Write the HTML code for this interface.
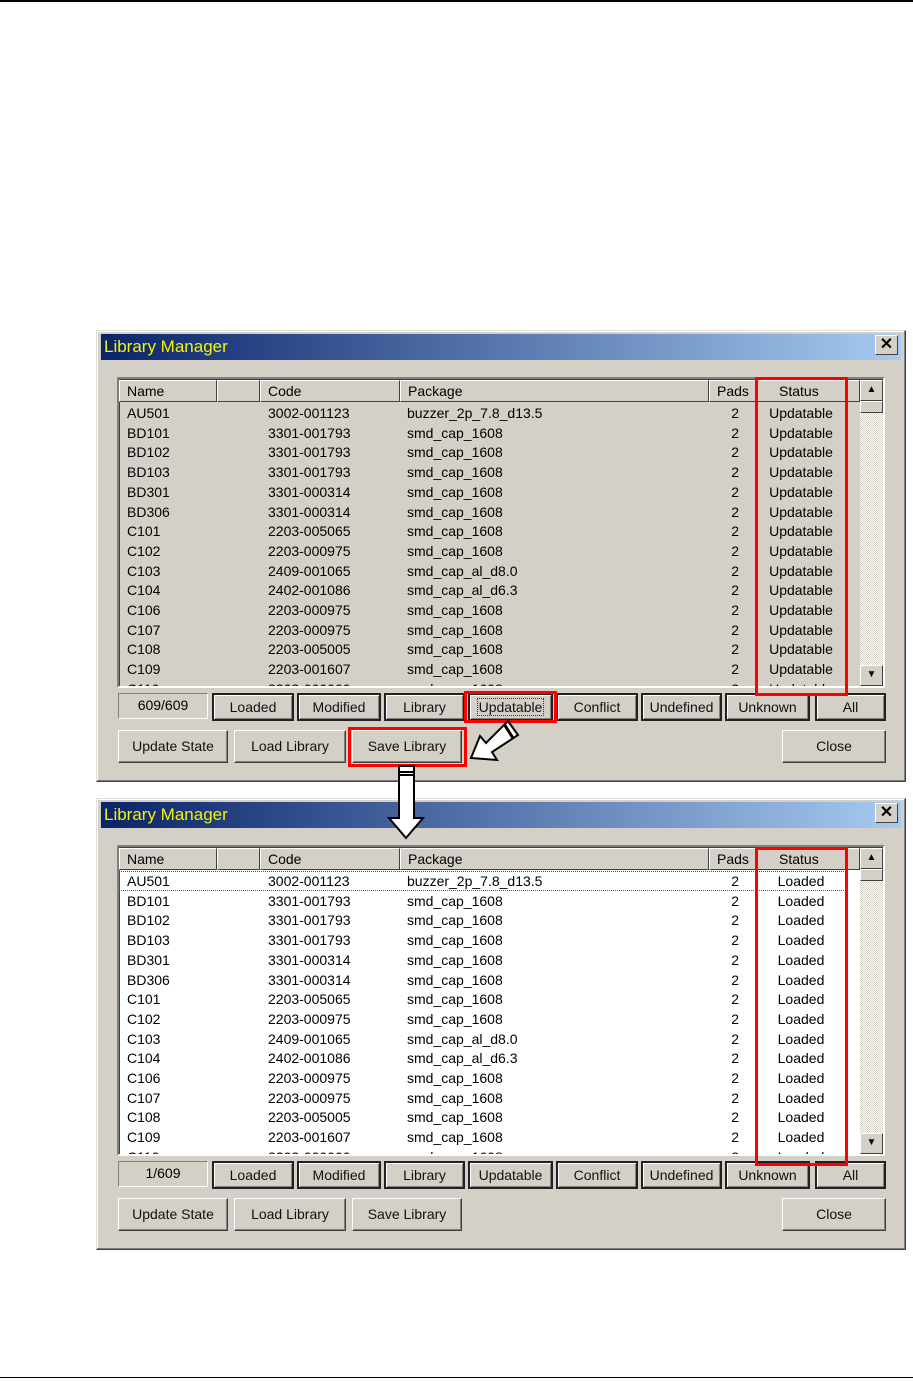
<!DOCTYPE html>
<html><head><meta charset="utf-8"><style>
*{margin:0;padding:0;box-sizing:border-box}
body{width:913px;height:1381px;background:#fff;position:relative;overflow:hidden;font-family:"Liberation Sans",Tahoma,sans-serif;font-size:14px;color:#000}
.a{position:absolute}
.dlg{position:absolute;left:96px;top:330px;width:810px;height:452px;background:#d4d0c8;border:1px solid;border-color:#e0ded8 #404040 #404040 #e0ded8;box-shadow:inset -1px -1px #808080,inset 1px 1px #fff}
.title{position:absolute;left:4px;top:3px;width:800px;height:26px;background:linear-gradient(90deg,#0a246a,#a6caf0);color:#f4f400;font-size:17px;line-height:26px;padding-left:3px}
.xbtn{position:absolute;left:778px;top:4px;width:23px;height:20px;background:#d4d0c8;border:1px solid;border-color:#fff #404040 #404040 #fff;font-size:16px;font-weight:bold;line-height:17px;text-align:center}
.list{position:absolute;left:117px;top:377px;width:768px;height:311px;border:2px solid;border-color:#808080 #fff #fff #808080;box-shadow:inset 1px 1px #404040}
.hd{position:absolute;top:380px;height:22px;background:#d4d0c8;border:1px solid;border-color:#fff #404040 #404040 #fff;line-height:20px;padding-left:7px}
.body{position:absolute;left:119px;top:402px;width:741px;height:284px;overflow:hidden}
.r{position:absolute;left:0;width:741px;height:20px;line-height:20px}
.r span{position:absolute;white-space:nowrap}
.c1{left:8px}.c2{left:149px}.c3{left:288px}.c4{left:590px;width:30px;text-align:right}.c5{left:637px;width:90px;text-align:center}
.sb{position:absolute;left:860px;top:380px;width:23px;height:306px;background:repeating-conic-gradient(#fff 0 25%,#d4d0c8 0 50%) 0 0/2px 2px}
.sbb{position:absolute;left:860px;width:23px;height:21px;background:#d4d0c8;border:1px solid;border-color:#fff #404040 #404040 #fff}
.btn{position:absolute;background:#d4d0c8;border:1px solid;border-color:#fff #404040 #404040 #fff;box-shadow:inset -1px -1px #808080;text-align:center;color:#111}
.t{border:2px solid #222;box-shadow:inset 1px 1px #fff,inset -1px -1px #808080}
.red{position:absolute;border:3px solid #f00}
</style></head><body>
<div class="a" style="left:0;top:0;width:913px;height:2px;background:#000"></div>
<div class="a" style="left:0;top:1377px;width:913px;height:1px;background:#000"></div>

<!-- DIALOG 1 -->
<div class="a" style="left:0;top:0;width:913px;height:800px">
<div class="dlg"><div class="title">Library Manager</div><div class="xbtn">✕</div></div>
<div class="list" style="background:#d4d0c8"></div>
<div class="hd" style="left:119px;width:98px">Name</div>
<div class="hd" style="left:217px;width:43px"></div>
<div class="hd" style="left:260px;width:140px">Code</div>
<div class="hd" style="left:400px;width:309px">Package</div>
<div class="hd" style="left:709px;width:47px">Pads</div>
<div class="hd" style="left:756px;width:91px;padding-left:22px">Status</div>
<div class="hd" style="left:847px;width:13px"></div>
<div class="body">
<div class="r" style="top:1px"><span class="c1">AU501</span><span class="c2">3002-001123</span><span class="c3">buzzer_2p_7.8_d13.5</span><span class="c4">2</span><span class="c5">Updatable</span></div>
<div class="r" style="top:20.7px"><span class="c1">BD101</span><span class="c2">3301-001793</span><span class="c3">smd_cap_1608</span><span class="c4">2</span><span class="c5">Updatable</span></div>
<div class="r" style="top:40.4px"><span class="c1">BD102</span><span class="c2">3301-001793</span><span class="c3">smd_cap_1608</span><span class="c4">2</span><span class="c5">Updatable</span></div>
<div class="r" style="top:60.1px"><span class="c1">BD103</span><span class="c2">3301-001793</span><span class="c3">smd_cap_1608</span><span class="c4">2</span><span class="c5">Updatable</span></div>
<div class="r" style="top:79.8px"><span class="c1">BD301</span><span class="c2">3301-000314</span><span class="c3">smd_cap_1608</span><span class="c4">2</span><span class="c5">Updatable</span></div>
<div class="r" style="top:99.5px"><span class="c1">BD306</span><span class="c2">3301-000314</span><span class="c3">smd_cap_1608</span><span class="c4">2</span><span class="c5">Updatable</span></div>
<div class="r" style="top:119.2px"><span class="c1">C101</span><span class="c2">2203-005065</span><span class="c3">smd_cap_1608</span><span class="c4">2</span><span class="c5">Updatable</span></div>
<div class="r" style="top:138.9px"><span class="c1">C102</span><span class="c2">2203-000975</span><span class="c3">smd_cap_1608</span><span class="c4">2</span><span class="c5">Updatable</span></div>
<div class="r" style="top:158.6px"><span class="c1">C103</span><span class="c2">2409-001065</span><span class="c3">smd_cap_al_d8.0</span><span class="c4">2</span><span class="c5">Updatable</span></div>
<div class="r" style="top:178.3px"><span class="c1">C104</span><span class="c2">2402-001086</span><span class="c3">smd_cap_al_d6.3</span><span class="c4">2</span><span class="c5">Updatable</span></div>
<div class="r" style="top:198px"><span class="c1">C106</span><span class="c2">2203-000975</span><span class="c3">smd_cap_1608</span><span class="c4">2</span><span class="c5">Updatable</span></div>
<div class="r" style="top:217.7px"><span class="c1">C107</span><span class="c2">2203-000975</span><span class="c3">smd_cap_1608</span><span class="c4">2</span><span class="c5">Updatable</span></div>
<div class="r" style="top:237.4px"><span class="c1">C108</span><span class="c2">2203-005005</span><span class="c3">smd_cap_1608</span><span class="c4">2</span><span class="c5">Updatable</span></div>
<div class="r" style="top:257.1px"><span class="c1">C109</span><span class="c2">2203-001607</span><span class="c3">smd_cap_1608</span><span class="c4">2</span><span class="c5">Updatable</span></div>
<div class="r" style="top:276.8px"><span class="c1">C110</span><span class="c2">2203-000000</span><span class="c3">smd_cap_1608</span><span class="c4">2</span><span class="c5">Updatable</span></div>
</div>
<div class="sb"></div>
<div class="sbb" style="top:380px;font-size:10px;line-height:18px;text-align:center">▲</div>
<div class="sbb" style="top:401px;height:12px"></div>
<div class="sbb" style="top:665px;font-size:10px;line-height:18px;text-align:center">▼</div>
<div class="a" style="left:118px;top:693px;width:90px;height:26px;border:1px solid;border-color:#808080 #fff #fff #808080;text-align:center;line-height:22px">609/609</div>
<div class="btn t" style="left:212px;top:693px;width:82px;height:28px;line-height:24px">Loaded</div>
<div class="btn t" style="left:297px;top:693px;width:84px;height:28px;line-height:24px">Modified</div>
<div class="btn t" style="left:384px;top:693px;width:81px;height:28px;line-height:24px">Library</div>
<div class="btn t" style="left:468px;top:693px;width:85px;height:28px;line-height:24px"><span style="outline:1px dotted #333;padding:0 1px">Updatable</span></div>
<div class="btn t" style="left:556px;top:693px;width:82px;height:28px;line-height:24px">Conflict</div>
<div class="btn t" style="left:641px;top:693px;width:81px;height:28px;line-height:24px">Undefined</div>
<div class="btn t" style="left:725px;top:693px;width:85px;height:28px;line-height:24px">Unknown</div>
<div class="btn t" style="left:815px;top:693px;width:71px;height:28px;line-height:24px">All</div>
<div class="btn" style="left:118px;top:730px;width:110px;height:33px;line-height:31px">Update State</div>
<div class="btn" style="left:234px;top:730px;width:112px;height:33px;line-height:31px">Load Library</div>
<div class="btn" style="left:352px;top:730px;width:110px;height:33px;line-height:31px">Save Library</div>
<div class="btn" style="left:782px;top:730px;width:104px;height:33px;line-height:31px">Close</div>
<div class="red" style="left:755px;top:377px;width:93px;height:319px"></div>
<div class="red" style="left:464px;top:691px;width:93px;height:32px"></div>
<div class="red" style="left:348px;top:727px;width:119px;height:40px"></div>
</div>

<!-- DIALOG 2 -->
<div class="a" style="left:0;top:468px;width:913px;height:800px">
<div class="dlg"><div class="title">Library Manager</div><div class="xbtn">✕</div></div>
<div class="list" style="background:#fff"></div>
<div class="hd" style="left:119px;width:98px">Name</div>
<div class="hd" style="left:217px;width:43px"></div>
<div class="hd" style="left:260px;width:140px">Code</div>
<div class="hd" style="left:400px;width:309px">Package</div>
<div class="hd" style="left:709px;width:47px">Pads</div>
<div class="hd" style="left:756px;width:91px;padding-left:22px">Status</div>
<div class="hd" style="left:847px;width:13px"></div>
<div class="body">
<div class="r" style="top:1px;outline:1px dotted #555;outline-offset:-1px;width:727px"><span class="c1">AU501</span><span class="c2">3002-001123</span><span class="c3">buzzer_2p_7.8_d13.5</span><span class="c4">2</span><span class="c5">Loaded</span></div>
<div class="r" style="top:20.7px"><span class="c1">BD101</span><span class="c2">3301-001793</span><span class="c3">smd_cap_1608</span><span class="c4">2</span><span class="c5">Loaded</span></div>
<div class="r" style="top:40.4px"><span class="c1">BD102</span><span class="c2">3301-001793</span><span class="c3">smd_cap_1608</span><span class="c4">2</span><span class="c5">Loaded</span></div>
<div class="r" style="top:60.1px"><span class="c1">BD103</span><span class="c2">3301-001793</span><span class="c3">smd_cap_1608</span><span class="c4">2</span><span class="c5">Loaded</span></div>
<div class="r" style="top:79.8px"><span class="c1">BD301</span><span class="c2">3301-000314</span><span class="c3">smd_cap_1608</span><span class="c4">2</span><span class="c5">Loaded</span></div>
<div class="r" style="top:99.5px"><span class="c1">BD306</span><span class="c2">3301-000314</span><span class="c3">smd_cap_1608</span><span class="c4">2</span><span class="c5">Loaded</span></div>
<div class="r" style="top:119.2px"><span class="c1">C101</span><span class="c2">2203-005065</span><span class="c3">smd_cap_1608</span><span class="c4">2</span><span class="c5">Loaded</span></div>
<div class="r" style="top:138.9px"><span class="c1">C102</span><span class="c2">2203-000975</span><span class="c3">smd_cap_1608</span><span class="c4">2</span><span class="c5">Loaded</span></div>
<div class="r" style="top:158.6px"><span class="c1">C103</span><span class="c2">2409-001065</span><span class="c3">smd_cap_al_d8.0</span><span class="c4">2</span><span class="c5">Loaded</span></div>
<div class="r" style="top:178.3px"><span class="c1">C104</span><span class="c2">2402-001086</span><span class="c3">smd_cap_al_d6.3</span><span class="c4">2</span><span class="c5">Loaded</span></div>
<div class="r" style="top:198px"><span class="c1">C106</span><span class="c2">2203-000975</span><span class="c3">smd_cap_1608</span><span class="c4">2</span><span class="c5">Loaded</span></div>
<div class="r" style="top:217.7px"><span class="c1">C107</span><span class="c2">2203-000975</span><span class="c3">smd_cap_1608</span><span class="c4">2</span><span class="c5">Loaded</span></div>
<div class="r" style="top:237.4px"><span class="c1">C108</span><span class="c2">2203-005005</span><span class="c3">smd_cap_1608</span><span class="c4">2</span><span class="c5">Loaded</span></div>
<div class="r" style="top:257.1px"><span class="c1">C109</span><span class="c2">2203-001607</span><span class="c3">smd_cap_1608</span><span class="c4">2</span><span class="c5">Loaded</span></div>
<div class="r" style="top:276.8px"><span class="c1">C110</span><span class="c2">2203-000000</span><span class="c3">smd_cap_1608</span><span class="c4">2</span><span class="c5">Loaded</span></div>
</div>
<div class="sb"></div>
<div class="sbb" style="top:380px;font-size:10px;line-height:18px;text-align:center">▲</div>
<div class="sbb" style="top:401px;height:12px"></div>
<div class="sbb" style="top:665px;font-size:10px;line-height:18px;text-align:center">▼</div>
<div class="a" style="left:118px;top:693px;width:90px;height:26px;border:1px solid;border-color:#808080 #fff #fff #808080;text-align:center;line-height:22px">1/609</div>
<div class="btn t" style="left:212px;top:693px;width:82px;height:28px;line-height:24px">Loaded</div>
<div class="btn t" style="left:297px;top:693px;width:84px;height:28px;line-height:24px">Modified</div>
<div class="btn t" style="left:384px;top:693px;width:81px;height:28px;line-height:24px">Library</div>
<div class="btn t" style="left:468px;top:693px;width:85px;height:28px;line-height:24px">Updatable</div>
<div class="btn t" style="left:556px;top:693px;width:82px;height:28px;line-height:24px">Conflict</div>
<div class="btn t" style="left:641px;top:693px;width:81px;height:28px;line-height:24px">Undefined</div>
<div class="btn t" style="left:725px;top:693px;width:85px;height:28px;line-height:24px">Unknown</div>
<div class="btn t" style="left:815px;top:693px;width:71px;height:28px;line-height:24px">All</div>
<div class="btn" style="left:118px;top:730px;width:110px;height:33px;line-height:31px">Update State</div>
<div class="btn" style="left:234px;top:730px;width:112px;height:33px;line-height:31px">Load Library</div>
<div class="btn" style="left:352px;top:730px;width:110px;height:33px;line-height:31px">Save Library</div>
<div class="btn" style="left:782px;top:730px;width:104px;height:33px;line-height:31px">Close</div>
<div class="red" style="left:755px;top:379px;width:93px;height:319px"></div>
</div>

<!-- arrows -->
<svg class="a" style="left:0;top:0" width="913" height="1381">
<g stroke="#000" stroke-width="2" fill="#fff" stroke-linejoin="miter">
<polygon points="399,766 414,766 414,818 423,818 406,838 389,818 399,818"/>
<line x1="399" y1="772" x2="414" y2="772"/>
<line x1="399" y1="775" x2="414" y2="775"/>
<polygon points="508,721 518,735 492,752 497,760 471,758 480,736 486,743"/>
<line x1="504" y1="724" x2="513" y2="738" stroke-width="3"/>
</g>
</svg>
</body></html>
